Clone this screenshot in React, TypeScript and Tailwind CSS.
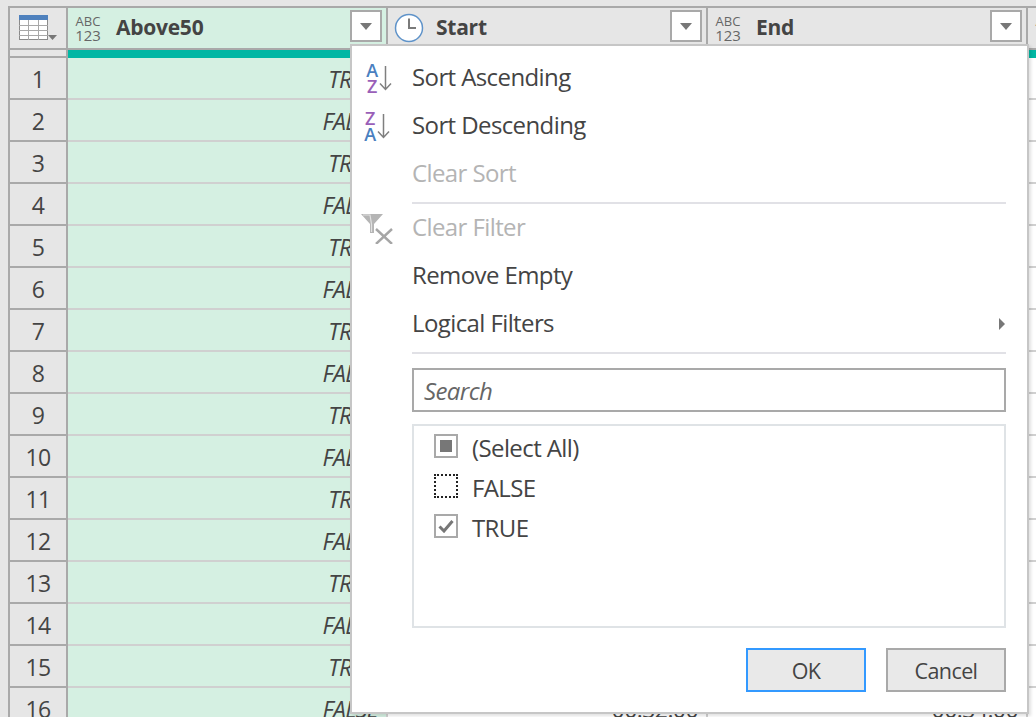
const rows = Array.from({ length: 16 }, (_, i) => ({
  id: i + 1,
  value: i % 2 === 0 ? "TRUE" : "FALSE",
  start: `00:${String(i + 17).padStart(2, "0")}:00`,
  end: `00:${String(i + 19).padStart(2, "0")}:00`,
}));

function AnyTypeIcon() {
  return (
    <div className="flex w-[26px] shrink-0 flex-col items-center tracking-normal text-[#666]">
      <span className="h-[13px] text-[13px] leading-[13px]">ABC</span>
      <span className="h-[14px] text-[15px] leading-[14px]">123</span>
    </div>
  );
}

function ClockIcon() {
  return (
    <svg width="30" height="30" viewBox="0 0 30 30" className="-ml-px -mr-[3px] shrink-0">
      <circle cx="15" cy="15" r="13.5" fill="#fff" stroke="#5f93c9" strokeWidth="1.5" />
      <path d="M15 5.5V15H22" fill="none" stroke="#7a7a7a" strokeWidth="2" />
    </svg>
  );
}

function TableIcon() {
  return (
    <svg width="40" height="26" viewBox="0 0 40 26">
      <rect x="0.5" y="0.5" width="28" height="24" fill="#fff" stroke="#8a8a8a" />
      <rect x="0" y="0" width="29" height="5" fill="#4f81bd" />
      <path d="M0 10.5H29M0 15.5H29M0 20.5H29M9.5 5V25M19.5 5V25" stroke="#a8a8a8" fill="none" />
      <path d="M29 20H38L33.5 25Z" fill="#777" />
    </svg>
  );
}

function HeaderCell({ name, icon, green }: { name: string; icon: React.ReactNode; green?: boolean }) {
  return (
    <div
      className={`flex w-[320px] shrink-0 items-center border-r-2 border-[#a9a9a9] pl-[7px] ${
        green ? "bg-[#d5f0e2]" : "bg-[#e6e6e6]"
      }`}
    >
      {icon}
      <span className="ml-[15px] text-[21px] font-bold tracking-[-0.012em] text-[#444]">{name}</span>
      <div className="ml-auto mr-[4px] mt-[-4px] flex h-8 w-8 items-center justify-center border-2 border-[#a9a9a9] bg-white">
        <svg width="12" height="7" viewBox="0 0 12 7">
          <path d="M0 0H12L6 7Z" fill="#777" />
        </svg>
      </div>
    </div>
  );
}

function SortIcon({
  top,
  bottom,
  topColor,
  bottomColor,
  shifted,
}: {
  top: string;
  bottom: string;
  topColor: string;
  bottomColor: string;
  shifted?: boolean;
}) {
  return (
    <div className={`flex items-center ${shifted ? "ml-[2px]" : ""}`}>
      <div className="flex w-[12px] flex-col items-center text-[18px] font-semibold leading-[16px]">
        <span className={topColor}>{top}</span>
        <span className={bottomColor}>{bottom}</span>
      </div>
      <svg width="13" height="26" viewBox="0 0 13 26" className="ml-px">
        <path d="M6.5 1V24M1 18.5L6.5 24.5L12 18.5" fill="none" stroke="#7f7f7f" strokeWidth="1.5" />
      </svg>
    </div>
  );
}

function ClearFilterIcon() {
  return (
    <svg width="34" height="32" viewBox="0 0 34 32" className="-ml-[3px]">
      <path d="M0 2H22L13 12V21H9V12Z" fill="#b5b5b5" />
      <path d="M2 3H9L10.5 12V20" fill="none" stroke="#e2e2e2" strokeWidth="1.2" />
      <path d="M15 17L31 32M31 17L15 32" stroke="#a6a6a6" strokeWidth="2.4" />
    </svg>
  );
}

function MenuItem({ label, icon, disabled, arrow }: { label: string; icon?: React.ReactNode; disabled?: boolean; arrow?: boolean }) {
  return (
    <div className="flex h-12 items-center">
      <div className="flex w-[60px] shrink-0 items-center pl-[12px]">{icon}</div>
      <span className={`mb-[2px] ${disabled ? "text-[#b4b4b4]" : "text-[#444]"}`}>{label}</span>
      {arrow && (
        <svg width="6" height="12" viewBox="0 0 6 12" className="ml-auto mr-[22px]">
          <path d="M0 0L6 6L0 12Z" fill="#777" />
        </svg>
      )}
    </div>
  );
}

function FilterMenu() {
  return (
    <div className="absolute left-[350px] top-[44px] w-[679px] border-2 border-[#c6c6c6] bg-white pt-2 pb-5 text-[24px] tracking-[-0.025em] shadow-[2px_2px_3px_rgba(0,0,0,0.12)]">
      <MenuItem
        label="Sort Ascending"
        icon={<SortIcon shifted top="A" bottom="Z" topColor="text-[#4a80bf]" bottomColor="text-[#9a5fb8]" />}
      />
      <MenuItem
        label="Sort Descending"
        icon={<SortIcon top="Z" bottom="A" topColor="text-[#9a5fb8]" bottomColor="text-[#4a80bf]" />}
      />
      <MenuItem label="Clear Sort" disabled />
      <div className="ml-[60px] mr-[21px] mt-1 h-[2px] bg-[#e1e1e6]" />
      <MenuItem label="Clear Filter" disabled icon={<ClearFilterIcon />} />
      <MenuItem label="Remove Empty" />
      <MenuItem label="Logical Filters" arrow />
      <div className="ml-[60px] mr-[21px] mt-1 h-[2px] bg-[#e1e1e6]" />

      <div className="ml-[60px] mr-[21px] mt-[14px] flex h-11 items-center border-2 border-[#a9a9a9] pl-[10px] pt-[2px] italic text-[#666]">
        Search
      </div>

      <div className="ml-[60px] mr-[21px] mt-3 flex h-[204px] flex-col border-2 border-[#dfe3e6] pl-5 pt-[2px] text-[#444]">
        <div className="flex h-10 items-center gap-[14px]">
          <div className="mb-[4px] flex h-6 w-6 items-center justify-center border-2 border-[#a9a9a9]">
            <div className="h-3 w-3 bg-[#777]" />
          </div>
          <span>(Select All)</span>
        </div>
        <div className="flex h-10 items-center gap-[14px]">
          <div className="mb-[4px] h-6 w-6 border-2 border-dotted border-[#222]" />
          <span>FALSE</span>
        </div>
        <div className="flex h-10 items-center gap-[14px]">
          <div className="mb-[4px] flex h-6 w-6 items-center justify-center border-2 border-[#a9a9a9]">
            <svg width="16" height="14" viewBox="0 0 16 14">
              <path d="M1.5 7.5L6 12L14.5 2" fill="none" stroke="#777" strokeWidth="3" />
            </svg>
          </div>
          <span>TRUE</span>
        </div>
      </div>

      <div className="mr-[21px] mt-5 flex justify-end gap-5 text-[21.5px] text-[#444]">
        <button type="button" className="h-11 w-[120px] border-2 border-[#3399ff] bg-[#e9e9e9] pt-[2px]">
          OK
        </button>
        <button type="button" className="h-11 w-[120px] border-2 border-[#a9a9a9] bg-[#e9e9e9] pt-[2px]">
          Cancel
        </button>
      </div>
    </div>
  );
}

export default function App() {
  return (
    <div className="relative h-[717px] w-[1036px] overflow-hidden bg-[#e6e6e6] pl-2 pt-1.5 font-['Open_Sans',sans-serif] text-[23px] tracking-[-0.025em] text-[#444]">
      <div className="flex h-11 w-[1400px] border-y-2 border-[#a9a9a9]">
        <div className="flex w-[60px] shrink-0 items-center justify-center border-x-2 border-[#a9a9a9] pl-[1px]">
          <TableIcon />
        </div>
        <HeaderCell name="Above50" icon={<AnyTypeIcon />} green />
        <HeaderCell name="Start" icon={<ClockIcon />} />
        <HeaderCell name="End" icon={<AnyTypeIcon />} />
        <HeaderCell name="Total" icon={<AnyTypeIcon />} />
      </div>

      <div className="flex h-2 w-[1400px]">
        <div className="w-[60px] shrink-0 border-x-2 border-b-2 border-[#a9a9a9]" />
        <div className="flex-1 bg-[#00b7a4]" />
      </div>

      {rows.map((row) => (
        <div key={row.id} className="flex h-[42px] w-[1400px]">
          <div className="flex w-[60px] shrink-0 items-center justify-center border-x-2 border-b-2 border-[#a9a9a9] pt-[3px]">
            {row.id}
          </div>
          <div className="flex w-[320px] shrink-0 items-center justify-end border-r-2 border-b-2 border-[#d0d0d0] bg-[#d5f0e2] pr-2 pt-[2px] italic">
            {row.value}
          </div>
          <div className="flex w-[320px] shrink-0 items-center justify-end border-r-2 border-b-2 border-[#d0d0d0] bg-white pr-2 pt-[2px]">
            {row.start}
          </div>
          <div className="flex w-[320px] shrink-0 items-center justify-end border-r-2 border-b-2 border-[#d0d0d0] bg-white pr-2 pt-[2px]">
            {row.end}
          </div>
          <div className="w-[320px] shrink-0 border-b-2 border-[#d0d0d0] bg-white" />
        </div>
      ))}

      <FilterMenu />
    </div>
  );
}
